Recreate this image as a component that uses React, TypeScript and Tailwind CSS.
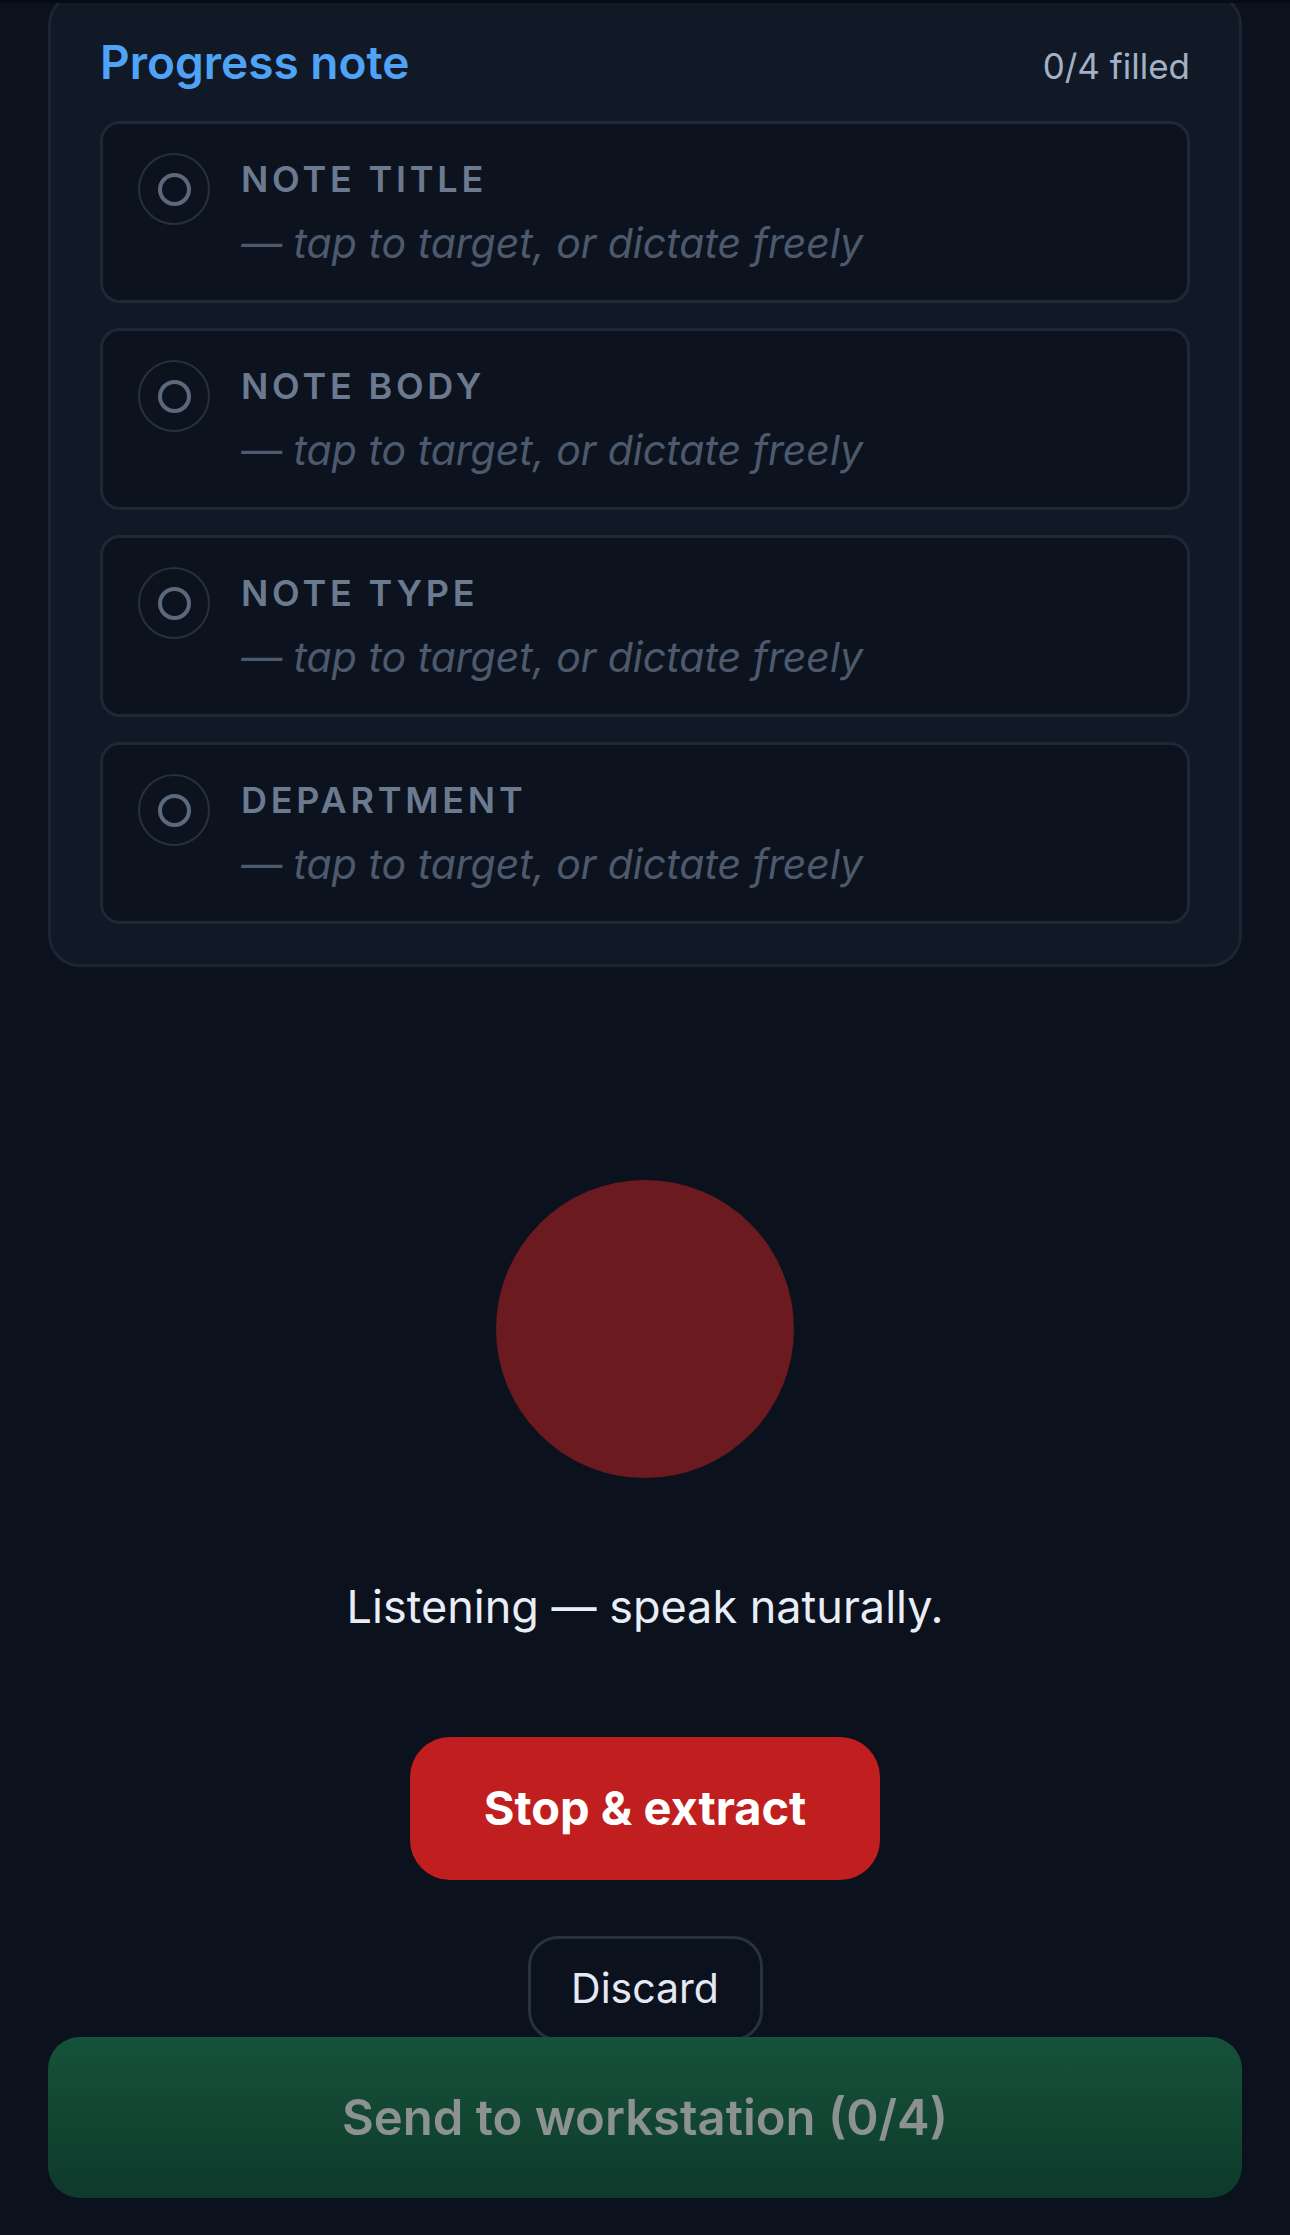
import React from "react";

const fields = ["Note title", "Note body", "Note type", "Department"];

function Field({ label }: { label: string }) {
  return (
    <div className="flex items-start gap-[31px] rounded-[20px] border-[3px] border-[#1f2836] bg-[#0c131f] px-[35px] pt-[31px] pb-[27px]">
      <div className="-mt-[2px] flex h-[72px] w-[72px] shrink-0 items-center justify-center rounded-full border-2 border-[#253040]">
        <div className="h-[33px] w-[33px] rounded-full border-[4px] border-[#5c687b]" />
      </div>
      <div className="flex flex-col">
        <div className="text-[36px] leading-[48px] font-semibold uppercase tracking-[0.105em] text-[#6b7a8f]">
          {label}
        </div>
        <div className="mt-[10px] text-[41px] leading-[60px] italic text-[#4d5a6e]">
          — tap to target, or dictate freely
        </div>
      </div>
    </div>
  );
}

export default function App() {
  return (
    <div className="relative min-h-[2235px] overflow-hidden bg-[#0b111d] px-12 font-['Inter','Noto_Sans',sans-serif]">
      <div className="absolute inset-x-0 top-0 h-[3px] bg-[#070b13]" />
      <section className="-mt-[7px] rounded-[32px] border-[3px] border-[#1c2533] bg-[#111926] px-[49px] pt-[36px] pb-[40px]">
        <div className="flex h-[60px] items-baseline justify-between">
          <h2 className="text-[46px] leading-[60px] font-semibold text-[#4fa3f7]">Progress note</h2>
          <span className="text-[35px] leading-[60px] text-[#a3b1c6]">0/4 filled</span>
        </div>
        <div className="mt-[29px] flex flex-col gap-[25px]">
          {fields.map((f) => (
            <Field key={f} label={f} />
          ))}
        </div>
      </section>

      <main className="flex flex-col items-center pb-[220px]">
        <div className="mt-[213px] h-[298px] w-[298px] rounded-full bg-[#6b1a1f]" />
        <p className="mt-[99px] text-[45px] leading-[60px] text-[#e8edf6]">Listening — speak naturally.</p>
        <button className="mt-[100px] flex h-[143px] w-[470px] items-center justify-center rounded-[40px] bg-[#c01e1f] text-[47px] font-bold text-white">
          Stop &amp; extract
        </button>
        <button className="mt-[56px] flex h-[105px] w-[235px] items-center justify-center rounded-[30px] border-[3px] border-[#263142] bg-[#0b111d] text-[41px] text-[#e5e9f5]">
          Discard
        </button>
      </main>

      <div className="fixed bottom-[37px] left-12 right-12 flex h-[161px] items-center justify-center rounded-[32px] bg-gradient-to-b from-[#15523a] to-[#0e3a2b]">
        <span className="text-[49px] font-semibold text-[#8b928f]">Send to workstation (0/4)</span>
      </div>
    </div>
  );
}
